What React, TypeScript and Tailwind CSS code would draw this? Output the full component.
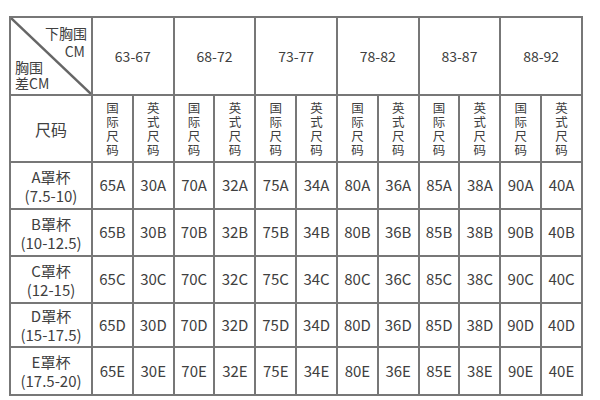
import React from "react";

const ranges = ["63-67", "68-72", "73-77", "78-82", "83-87", "88-92"];
const intl = [65, 70, 75, 80, 85, 90];
const uk = [30, 32, 34, 36, 38, 40];
const cups = [
  { c: "A", r: "(7.5-10)", h: "h-[47px]" },
  { c: "B", r: "(10-12.5)", h: "h-[47px]" },
  { c: "C", r: "(12-15)", h: "h-[47px]" },
  { c: "D", r: "(15-17.5)", h: "h-[44px]" },
  { c: "E", r: "(17.5-20)", h: "h-[48px]" },
];

const bd = "border-2 border-[#777777]";

function Vert({ t }: { t: string }) {
  return (
    <div className="flex flex-col items-center text-[12.5px] leading-[14px]">
      {t.split("").map((ch, i) => (
        <span key={i} className="block h-[14px]">{ch}</span>
      ))}
    </div>
  );
}

export default function App() {
  return (
    <div
      className="w-[600px] h-[400px] bg-white pl-[9px] pt-[16px] text-[#404040]"
      style={{ fontFamily: '"Noto Sans CJK SC", "Noto Sans", sans-serif' }}
    >
      <table className="table-fixed border-collapse w-[574px]">
        <colgroup>
          <col className="w-[82px]" />
          {Array.from({ length: 12 }).map((_, i) => (
            <col key={i} />
          ))}
        </colgroup>
        <tbody>
          <tr className="h-[78px]">
            <td className={`${bd} relative p-0`}>
              <svg className="absolute inset-0 w-full h-full" preserveAspectRatio="none" viewBox="0 0 100 100">
                <line x1="0" y1="0" x2="100" y2="100" stroke="#666666" strokeWidth="2.4" vectorEffect="non-scaling-stroke" />
              </svg>
              <div className="relative flex flex-col h-full text-[14px] leading-[16px] pt-[5px] pb-[2px] px-[4px]">
                <div className="text-right">下胸围</div>
                <div className="text-right pr-[2px] mt-[2px]">CM</div>
                <div className="text-left">胸围</div>
                <div className="text-left">差CM</div>
              </div>
            </td>
            {ranges.map((r) => (
              <td key={r} colSpan={2} className={`${bd} text-center text-[14px]`}>
                {r}
              </td>
            ))}
          </tr>
          <tr className="h-[67px]">
            <td className={`${bd} text-center text-[16px]`}>尺码</td>
            {ranges.map((r) => (
              <React.Fragment key={r}>
                <td className={`${bd} align-middle`}>
                  <Vert t="国际尺码" />
                </td>
                <td className={`${bd} align-middle`}>
                  <Vert t="英式尺码" />
                </td>
              </React.Fragment>
            ))}
          </tr>
          {cups.map((cup) => (
            <tr key={cup.c} className={cup.h}>
              <td className={`${bd} text-center text-[15px] leading-[19px]`}>
                <div>{cup.c}罩杯</div>
                <div>{cup.r}</div>
              </td>
              {intl.map((n, i) => (
                <React.Fragment key={n}>
                  <td className={`${bd} text-center text-[15px]`}>
                    {n}
                    {cup.c}
                  </td>
                  <td className={`${bd} text-center text-[15px]`}>
                    {uk[i]}
                    {cup.c}
                  </td>
                </React.Fragment>
              ))}
            </tr>
          ))}
        </tbody>
      </table>
    </div>
  );
}
